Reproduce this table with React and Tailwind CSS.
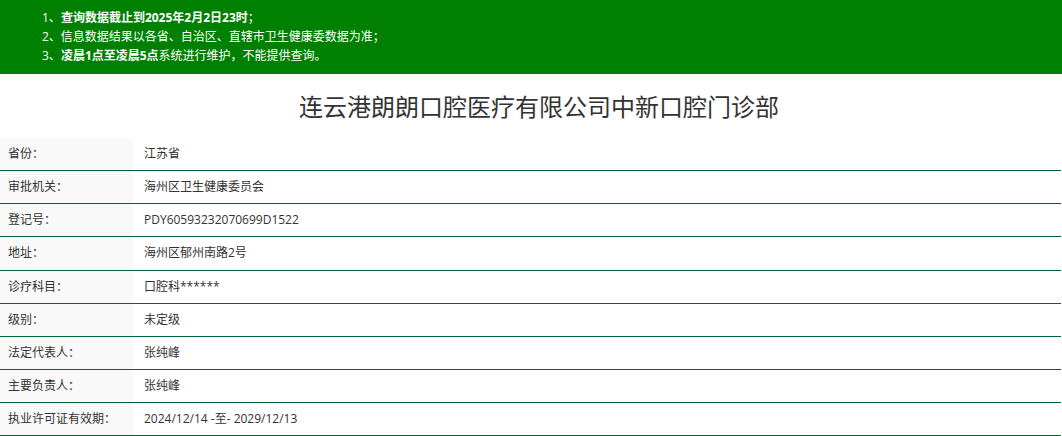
const rows = [
  ['省份：', '江苏省'],
  ['审批机关：', '海州区卫生健康委员会'],
  ['登记号：', 'PDY60593232070699D1522'],
  ['地址：', '海州区郁州南路2号'],
  ['诊疗科目：', '口腔科******'],
  ['级别：', '未定级'],
  ['法定代表人：', '张纯峰'],
  ['主要负责人：', '张纯峰'],
  ['执业许可证有效期：', '2024/12/14 -至- 2029/12/13'],
];

export default function App() {
  return (
    <div className="min-h-screen bg-white text-[#333] font-['Open_Sans','Noto_Sans_CJK_SC',sans-serif]">
      {/* notice banner */}
      <div className="bg-[#008000] text-white text-[12px] leading-[19px] pl-[42px] pt-[8px] h-[74px]">
        <p>1、<b>查询数据截止到2025年2月2日23时</b>；</p>
        <p>2、信息数据结果以各省、自治区、直辖市卫生健康委数据为准；</p>
        <p>3、<b>凌晨1点至凌晨5点</b>系统进行维护，不能提供查询。</p>
      </div>

      <h1 className="h-[64px] pl-[16px] pt-[2px] flex items-center justify-center text-[24px] text-[#333]">
        连云港朗朗口腔医疗有限公司中新口腔门诊部
      </h1>

      <div className="w-[1061px]">
        {rows.map(([label, value]) => (
          <div key={label} className="flex h-[33.15px] border-b border-[#006633] text-[12px]">
            <div className="w-[133px] bg-[#f9f9f9] pl-[8px] flex items-center">{label}</div>
            <div className="flex-1 pl-[11px] flex items-center">{value}</div>
          </div>
        ))}
      </div>
    </div>
  );
}
